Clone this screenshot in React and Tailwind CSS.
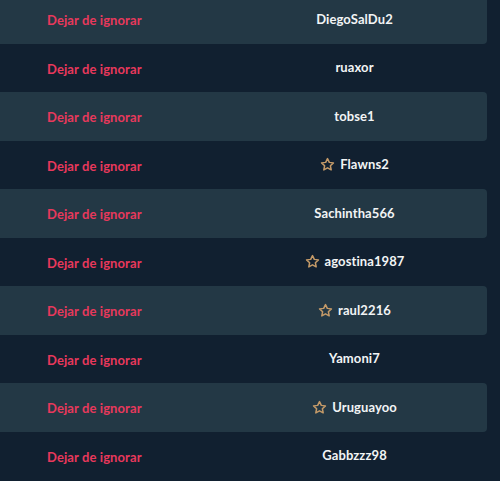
import React from "react";

const users = [
  { name: "DiegoSalDu2", star: false },
  { name: "ruaxor", star: false },
  { name: "tobse1", star: false },
  { name: "Flawns2", star: true },
  { name: "Sachintha566", star: false },
  { name: "agostina1987", star: true },
  { name: "raul2216", star: true },
  { name: "Yamoni7", star: false },
  { name: "Uruguayoo", star: true },
  { name: "Gabbzzz98", star: false },
];

function Star() {
  return (
    <svg width="15" height="15" viewBox="0 0 24 24" fill="none" stroke="#c49a68" strokeWidth="2.4" strokeLinejoin="round">
      <path d="M12 2.5l2.9 6.1 6.6.8-4.9 4.6 1.3 6.6L12 17.3l-5.9 3.3 1.3-6.6-4.9-4.6 6.6-.8z" />
    </svg>
  );
}

export default function App() {
  return (
    <div className="min-h-[481px] w-[500px] overflow-hidden bg-[#112030]" style={{ fontFamily: "Lato, 'Liberation Sans', sans-serif" }}>
      <div className="-mt-[5px] w-[487px]">
        {users.map((u, i) => (
          <div
            key={u.name}
            className={
              "flex h-[48.5px] items-center rounded-r-[4px] " +
              (i % 2 === 0 ? "bg-[#233845]" : "bg-transparent")
            }
          >
            <div className="w-[226px] pl-[47px]">
              <button type="button" className="text-[13px] font-bold tracking-[0.1px] text-[#e8385c]">
                Dejar de ignorar
              </button>
            </div>
            <div className="flex flex-1 items-center justify-center gap-[5px] pr-[4px]">
              {u.star && <Star />}
              <span className="text-[13px] font-bold tracking-[0.1px] text-[#f2f4f5]">{u.name}</span>
            </div>
          </div>
        ))}
      </div>
    </div>
  );
}
